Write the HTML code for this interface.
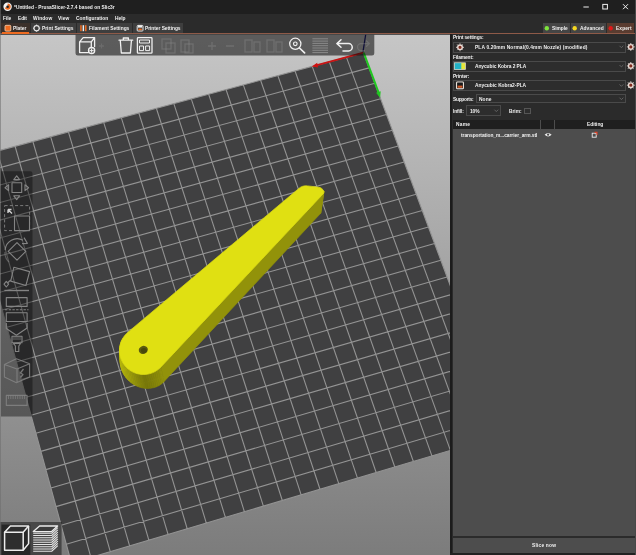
<!DOCTYPE html>
<html><head><meta charset="utf-8"><title>PrusaSlicer</title>
<style>
html,body{margin:0;padding:0;background:#2b2b2b;}
body{width:636px;height:555px;position:relative;overflow:hidden;font-family:"Liberation Sans",sans-serif;}
.a{position:absolute;box-sizing:border-box;}
.t{position:absolute;white-space:nowrap;line-height:20px;height:20px;font-size:9.7px;transform:scale(0.5);transform-origin:0 0;}
</style></head><body>
<div class="a" style="left:0;top:0;width:636px;height:13.8px;background:#1f1f1f"></div>
<div class="a" style="left:0;top:13.8px;width:636px;height:20px;background:#2b2b2b"></div>
<!-- tabs -->
<div class="a" style="left:1px;top:22.8px;width:28.6px;height:10.4px;background:#3b302a"></div>
<div class="a" style="left:30.6px;top:22.8px;width:45.6px;height:10.2px;background:#3e3e3e"></div>
<div class="a" style="left:77.2px;top:22.8px;width:54.8px;height:10.2px;background:#3e3e3e"></div>
<div class="a" style="left:133.4px;top:22.8px;width:50px;height:10.2px;background:#3e3e3e"></div>
<!-- mode buttons -->
<div class="a" style="left:542.8px;top:22.8px;width:27px;height:10.2px;background:#454545"></div>
<div class="a" style="left:571px;top:22.8px;width:34.6px;height:10.2px;background:#454545"></div>
<div class="a" style="left:607px;top:22.8px;width:27.4px;height:10.2px;background:#5a3c30"></div>
<!-- separator line -->
<div class="a" style="left:0;top:32.9px;width:636px;height:1.5px;background:#8e5a48"></div>
<div class="a" style="left:1.6px;top:31.9px;width:27.4px;height:2px;background:#ed6b21"></div>
<svg id="cv" width="450" height="555" viewBox="0 0 450 555" style="position:absolute;left:0;top:0">
<defs><linearGradient id="bg" x1="0" y1="0" x2="0" y2="1"><stop offset="0" stop-color="#c6c6c6"/><stop offset="1" stop-color="#7c7c7c"/></linearGradient>
<clipPath id="cc"><rect x="0" y="34.5" width="450" height="520.5"/></clipPath></defs>
<g clip-path="url(#cc)">
<rect x="0" y="34.5" width="450" height="520.5" fill="url(#bg)"/>
<polygon points="363.40,52.60 -38.60,160.70 71.50,563.20 505.60,434.00" fill="#404041"/>
<path d="M363.40 52.60L505.60 434.00M346.37 57.18L487.25 439.46M329.29 61.77L468.85 444.94M312.18 66.37L450.40 450.43M295.03 70.99L431.91 455.93M277.83 75.61L413.37 461.45M260.60 80.24L394.79 466.98M243.33 84.89L376.16 472.53M226.02 89.54L357.48 478.08M208.66 94.21L338.75 483.66M191.27 98.89L319.98 489.25M173.83 103.58L301.16 494.85M156.36 108.27L282.29 500.46M138.84 112.98L263.37 506.09M121.29 117.71L244.40 511.74M103.69 122.44L225.39 517.40M86.05 127.18L206.32 523.07M68.37 131.94L187.21 528.76M50.64 136.70L168.05 534.46M32.88 141.48L148.84 540.18M15.07 146.27L129.58 545.91M-2.78 151.07L110.27 551.66M-20.67 155.88L90.91 557.42M-38.60 160.70L71.50 563.20M363.40 52.60L-38.60 160.70M369.10 67.90L-34.19 176.81M374.85 83.31L-29.76 193.03M380.63 98.82L-25.29 209.38M386.46 114.45L-20.78 225.84M392.33 130.18L-16.25 242.42M398.24 146.04L-11.68 259.13M404.19 162.00L-7.07 275.96M410.18 178.08L-2.44 292.91M416.22 194.28L2.24 309.99M422.30 210.59L6.94 327.20M428.43 227.02L11.69 344.53M434.60 243.58L16.46 362.00M440.82 260.25L21.28 379.60M447.08 277.05L26.13 397.33M453.39 293.97L31.02 415.20M459.75 311.02L35.94 433.21M466.15 328.20L40.90 451.35M472.60 345.50L45.91 469.63M479.10 362.93L50.94 488.06M485.65 380.50L56.02 506.62M492.25 398.20L61.14 525.33M498.90 416.03L66.30 544.19M505.60 434.00L71.50 563.20" stroke="#939393" stroke-width="1.1" fill="none"/>
<path d="M363.4 52.6L315.2 65.6" stroke="#c81414" stroke-width="1.8" fill="none"/>
<polygon points="311.7,66.4 317.2,62.8 318.0,67.4" fill="#d01010"/>
<path d="M363.7 52.6L378.9 93.3" stroke="#20c820" stroke-width="2" fill="none"/>
<polygon points="380.1,97.8 376.1,92.7 380.7,91.3" fill="#20c820"/>
<path d="M363.0 51.6L365.7 34.5" stroke="#14146e" stroke-width="1.3" fill="none"/>
<polygon points="324.00,191.40 323.60,193.40 320.67,213.34 321.03,211.38" fill="rgb(155,155,10)" stroke="rgb(155,155,10)" stroke-width="0.6"/>
<polygon points="323.60,193.40 161.01,366.91 164.16,381.45 320.67,213.34" fill="rgb(146,146,10)" stroke="rgb(146,146,10)" stroke-width="0.6"/>
<polygon points="161.01,366.91 159.58,368.32 162.78,382.81 164.16,381.45" fill="rgb(145,145,10)" stroke="rgb(145,145,10)" stroke-width="0.6"/>
<polygon points="159.58,368.32 158.04,369.60 161.29,384.04 162.78,382.81" fill="rgb(142,142,9)" stroke="rgb(142,142,9)" stroke-width="0.6"/>
<polygon points="158.04,369.60 156.39,370.74 159.67,385.14 161.29,384.04" fill="rgb(140,140,9)" stroke="rgb(140,140,9)" stroke-width="0.6"/>
<polygon points="156.39,370.74 154.66,371.75 157.96,386.08 159.67,385.14" fill="rgb(138,138,9)" stroke="rgb(138,138,9)" stroke-width="0.6"/>
<polygon points="154.66,371.75 152.84,372.61 156.15,386.88 157.96,386.08" fill="rgb(135,135,9)" stroke="rgb(135,135,9)" stroke-width="0.6"/>
<polygon points="152.84,372.61 150.97,373.31 154.27,387.51 156.15,386.88" fill="rgb(132,132,9)" stroke="rgb(132,132,9)" stroke-width="0.6"/>
<polygon points="150.97,373.31 149.04,373.85 152.32,387.99 154.27,387.51" fill="rgb(129,129,9)" stroke="rgb(129,129,9)" stroke-width="0.6"/>
<polygon points="149.04,373.85 147.07,374.23 150.32,388.29 152.32,387.99" fill="rgb(126,126,8)" stroke="rgb(126,126,8)" stroke-width="0.6"/>
<polygon points="147.07,374.23 145.07,374.45 148.28,388.43 150.32,388.29" fill="rgb(123,123,8)" stroke="rgb(123,123,8)" stroke-width="0.6"/>
<polygon points="145.07,374.45 143.07,374.50 146.23,388.40 148.28,388.43" fill="rgb(120,120,8)" stroke="rgb(120,120,8)" stroke-width="0.6"/>
<polygon points="143.07,374.50 141.07,374.38 144.16,388.20 146.23,388.40" fill="rgb(123,123,8)" stroke="rgb(123,123,8)" stroke-width="0.6"/>
<polygon points="141.07,374.38 139.08,374.09 142.09,387.83 144.16,388.20" fill="rgb(128,128,8)" stroke="rgb(128,128,8)" stroke-width="0.6"/>
<polygon points="139.08,374.09 137.13,373.64 140.05,387.30 142.09,387.83" fill="rgb(133,133,9)" stroke="rgb(133,133,9)" stroke-width="0.6"/>
<polygon points="137.13,373.64 135.22,373.03 138.05,386.61 140.05,387.30" fill="rgb(138,138,9)" stroke="rgb(138,138,9)" stroke-width="0.6"/>
<polygon points="135.22,373.03 133.36,372.25 136.09,385.76 138.05,386.61" fill="rgb(143,143,10)" stroke="rgb(143,143,10)" stroke-width="0.6"/>
<polygon points="133.36,372.25 131.58,371.33 134.19,384.76 136.09,385.76" fill="rgb(148,148,10)" stroke="rgb(148,148,10)" stroke-width="0.6"/>
<polygon points="131.58,371.33 129.89,370.26 132.37,383.61 134.19,384.76" fill="rgb(153,153,10)" stroke="rgb(153,153,10)" stroke-width="0.6"/>
<polygon points="129.89,370.26 128.28,369.06 130.64,382.33 132.37,383.61" fill="rgb(157,157,10)" stroke="rgb(157,157,10)" stroke-width="0.6"/>
<polygon points="128.28,369.06 126.79,367.72 129.00,380.93 130.64,382.33" fill="rgb(161,161,11)" stroke="rgb(161,161,11)" stroke-width="0.6"/>
<polygon points="126.79,367.72 125.41,366.27 127.48,379.40 129.00,380.93" fill="rgb(164,164,11)" stroke="rgb(164,164,11)" stroke-width="0.6"/>
<polygon points="125.41,366.27 124.15,364.70 126.08,377.77 127.48,379.40" fill="rgb(168,168,11)" stroke="rgb(168,168,11)" stroke-width="0.6"/>
<polygon points="124.15,364.70 123.04,363.04 124.82,376.05 126.08,377.77" fill="rgb(171,171,11)" stroke="rgb(171,171,11)" stroke-width="0.6"/>
<polygon points="123.04,363.04 122.06,361.28 123.69,374.24 124.82,376.05" fill="rgb(174,174,12)" stroke="rgb(174,174,12)" stroke-width="0.6"/>
<polygon points="122.06,361.28 121.23,359.46 122.72,372.37 123.69,374.24" fill="rgb(176,176,12)" stroke="rgb(176,176,12)" stroke-width="0.6"/>
<polygon points="121.23,359.46 120.56,357.57 121.90,370.43 122.72,372.37" fill="rgb(178,178,12)" stroke="rgb(178,178,12)" stroke-width="0.6"/>
<polygon points="120.56,357.57 120.05,355.63 121.24,368.45 121.90,370.43" fill="rgb(179,179,12)" stroke="rgb(179,179,12)" stroke-width="0.6"/>
<polygon points="120.05,355.63 119.71,353.65 120.74,366.45 121.24,368.45" fill="rgb(181,181,12)" stroke="rgb(181,181,12)" stroke-width="0.6"/>
<polygon points="119.71,353.65 119.53,351.65 120.42,364.42 120.74,366.45" fill="rgb(181,181,12)" stroke="rgb(181,181,12)" stroke-width="0.6"/>
<polygon points="119.53,351.65 119.52,349.65 120.27,362.40 120.42,364.42" fill="rgb(181,181,12)" stroke="rgb(181,181,12)" stroke-width="0.6"/>
<polygon points="119.52,349.65 119.67,347.65 120.29,360.39 120.27,362.40" fill="rgb(181,181,12)" stroke="rgb(181,181,12)" stroke-width="0.6"/>
<polygon points="119.67,347.65 119.99,345.67 120.48,358.40 120.29,360.39" fill="rgb(181,181,12)" stroke="rgb(181,181,12)" stroke-width="0.6"/>
<polygon points="119.99,345.67 120.48,343.72 120.84,356.46 120.48,358.40" fill="rgb(180,180,12)" stroke="rgb(180,180,12)" stroke-width="0.6"/>
<polygon points="120.48,343.72 121.12,341.82 121.37,354.56 120.84,356.46" fill="rgb(178,178,12)" stroke="rgb(178,178,12)" stroke-width="0.6"/>
<polygon points="121.12,341.82 121.93,339.99 122.07,352.74 121.37,354.56" fill="rgb(176,176,12)" stroke="rgb(176,176,12)" stroke-width="0.6"/>
<polygon points="121.93,339.99 122.88,338.22 122.93,351.00 122.07,352.74" fill="rgb(174,174,12)" stroke="rgb(174,174,12)" stroke-width="0.6"/>
<polygon points="128.05,332.13 299.16,188.20 300.59,187.18 302.15,186.44 303.84,185.98 305.64,185.79 307.57,185.89 318.52,187.19 320.17,187.61 321.63,188.45 322.91,189.71 324.00,191.40 323.60,193.40 161.01,366.91 159.58,368.32 158.04,369.60 156.39,370.74 154.66,371.75 152.84,372.61 150.97,373.31 149.04,373.85 147.07,374.23 145.07,374.45 143.07,374.50 141.07,374.38 139.08,374.09 137.13,373.64 135.22,373.03 133.36,372.25 131.58,371.33 129.89,370.26 128.28,369.06 126.79,367.72 125.41,366.27 124.15,364.70 123.04,363.04 122.06,361.28 121.23,359.46 120.56,357.57 120.05,355.63 119.71,353.65 119.53,351.65 119.52,349.65 119.67,347.65 119.99,345.67 120.48,343.72 121.12,341.82 121.93,339.99 122.88,338.22 123.98,336.54 125.21,334.96 126.57,333.49" fill="#e0e012" stroke="#e0e012" stroke-width="0.7" stroke-linejoin="round"/>
<ellipse cx="143.3" cy="349.9" rx="4.6" ry="4.0" fill="#5a5a10" transform="rotate(-20 143.3 349.9)"/>
<ellipse cx="143.9" cy="350.6" rx="3.0" ry="2.5" fill="#47470c"/>
<path d="M75.5 34.5H374.3V53.2a2.3 2.3 0 0 1 -2.3 2.3H77.8a2.3 2.3 0 0 1 -2.3 -2.3Z" fill="rgba(12,12,12,0.57)"/>
<g fill="none" stroke="#f0f0f0" stroke-width="1.3" stroke-linejoin="round" stroke-linecap="round"><path d="M79.6 41.8V52.6H88.5 M79.6 41.8H91.3V47.5 M79.6 41.8L83.2 37.6H94.6L91.3 41.8 M94.6 37.6V46.5"/><circle cx="91.6" cy="50.6" r="3.1"/><path d="M89.9 50.6H93.3M91.6 48.9V52.3" stroke-width="1"/></g>
<g fill="none" stroke="#f0f0f0" stroke-width="1.3" stroke-linejoin="round" stroke-linecap="round"><path d="M119 40.2H132.7 M120.3 40.6L121.3 53H130.4L131.4 40.6 M123.3 40V38H128.4V40"/></g>
<g fill="none" stroke="#f0f0f0" stroke-width="1.3" stroke-linejoin="round" stroke-linecap="round"><rect x="137.4" y="37.6" width="14.6" height="15.6" rx="0.8"/><rect x="139.9" y="40" width="9.6" height="3" stroke-width="1"/><rect x="139.9" y="46" width="3.6" height="4.6" stroke-width="1"/><rect x="146" y="46" width="3.6" height="4.6" stroke-width="1"/></g>
<g fill="none" stroke="#9a9a9a" stroke-opacity="0.3" stroke-width="1.3"><path d="M99 46H104M101.5 43.5V48.5" stroke-opacity="0.25"/><rect x="162" y="39" width="9" height="10"/><rect x="166" y="43" width="9" height="10"/><rect x="181" y="40" width="8" height="12"/><rect x="185" y="44" width="8" height="9"/><path d="M208 46H216M212 42V50"/><path d="M226 46H234"/><rect x="245" y="40" width="7" height="12"/><rect x="254" y="42" width="6" height="10"/><rect x="267" y="40" width="7" height="12"/><rect x="276" y="42" width="6" height="10"/></g>
<g fill="none" stroke="#f0f0f0" stroke-width="1.3" stroke-linejoin="round" stroke-linecap="round"><circle cx="295.3" cy="43.8" r="5.6"/><circle cx="295.3" cy="43.8" r="1.8" stroke-width="1.2"/><path d="M299.5 48L304.6 52.8" stroke-width="1.7"/></g>
<path d="M312.4 38.8H328M312.4 41.1H328M312.4 43.4H328M312.4 45.7H328M312.4 48.0H328M312.4 50.3H328M312.4 52.6H328" stroke="#8e8e8e" stroke-width="0.9" fill="none"/>
<g fill="none" stroke="#f0f0f0" stroke-width="1.3" stroke-linejoin="round" stroke-linecap="round"><path d="M337.2 43.6H348.6A3.6 3.6 0 0 1 348.6 50.9H343" stroke-width="1.5"/><path d="M341 39.8L337 43.6L341 47.2" stroke-width="1.5"/></g>
<g fill="none" stroke="#9a9a9a" stroke-opacity="0.3" stroke-width="1.3"><path d="M369 43.6H361A3.4 3.4 0 0 0 361 50.6H365M366 40.5L369.3 43.6L366 46.8" stroke-opacity="0.3"/></g>
<path d="M1 171.3H30.3a2.2 2.2 0 0 1 2.2 2.2V416.4H1Z" fill="rgba(8,8,8,0.41)"/>
<g fill="none" stroke="#848484" stroke-width="1.1" stroke-linejoin="round"><rect x="12" y="182.7" width="9.7" height="9.8"/><path d="M13.8 179.6L16.7 175.8L19.6 179.6Z M13.8 195.8L16.7 199.6L19.6 195.8Z M8.6 184.8L5 187.7L8.6 190.6Z M25 184.8L28.6 187.7L25 190.6Z"/></g>
<g fill="none" stroke="#848484" stroke-width="1.1" stroke-linejoin="round"><rect x="4.6" y="205.6" width="25" height="25" stroke-dasharray="3 2.2" stroke-width="0.9"/><rect x="14.5" y="216" width="15" height="14.6"/><path d="M8 209.5L12 213.5M8 209.5V213M8 209.5H11.5" stroke="#cfcfcf" stroke-width="1.4"/></g>
<g fill="none" stroke="#848484" stroke-width="1.1" stroke-linejoin="round"><path d="M17 242.6L25.8 251.4L17 260.2L8.2 251.4Z"/><path d="M5.2 250A12 12 0 0 1 23 240.2"/><path d="M24 237.6L27.4 243.4L22 243.6" /><path d="M5 252A12 12 0 0 0 9 262" stroke-opacity="0.6"/></g>
<g fill="none" stroke="#848484" stroke-width="1.1" stroke-linejoin="round"><path d="M13.9 267.2L29.6 271.6L25.9 285.5L10.7 281.1Z"/><path d="M6.3 281.4L8.6 284.2L6.3 287L4 284.2Z M8 282.5L10.7 280"/><path d="M4.4 290.5H29" stroke-width="1.4"/></g>
<g fill="none" stroke="#848484" stroke-width="1.1" stroke-linejoin="round"><rect x="6.3" y="297.6" width="20.8" height="8.8"/><path d="M5 309.8H28.5" stroke-dasharray="2.4 1.3"/><rect x="6.3" y="312.7" width="20.8" height="8.8"/></g>
<g fill="none" stroke="#848484" stroke-width="1.1" stroke-linejoin="round"><path d="M6.3 323V328.5L16.4 335.2L27.1 328V323"/><rect x="12" y="336.2" width="10" height="6.6"/><path d="M14 336.2V340M16 336.2V340M18 336.2V340M20 336.2V340" stroke-width="0.7"/><path d="M13.5 343.5H20.5L18.8 346V351.5H15.4V346Z"/></g>
<g fill="none" stroke="#848484" stroke-width="1.1" stroke-linejoin="round" stroke-opacity="0.85"><path d="M16.4 358.8L29.6 363.8V377L16.4 382.7L4.4 377V364.5Z M4.4 364.5L17 368.9L29.6 363.8 M17 368.9V382.7"/><path d="M23.5 369L20.4 373L23 374.5L20.5 377.5" stroke-width="1.3"/></g>
<g fill="none" stroke="#848484" stroke-width="1.1" stroke-linejoin="round" stroke-opacity="0.85"><rect x="6.3" y="395.4" width="20.8" height="10"/><path d="M8.5 395.4V399M10.8 395.4V399M13.1 395.4V399M15.4 395.4V399M17.7 395.4V399M20 395.4V399M22.3 395.4V399M24.6 395.4V399" stroke-width="0.8"/></g>
<rect x="0" y="522" width="61.6" height="34" fill="rgba(0,0,0,0.44)"/>
<rect x="1.5" y="524.6" width="28.8" height="31" fill="#262626"/>
<g fill="none" stroke="#ececec" stroke-width="1.5" stroke-linejoin="round"><path d="M4.6 532.2H23.2V550.2H4.6Z" fill="#2e2e2e"/><path d="M4.6 532.2L10.4 526H28.6L23.2 532.2Z" fill="#2e2e2e"/><path d="M28.6 526V543.6L23.2 550.2" fill="none"/></g>
<path d="M33.3 531.6L39.6 526H57.6L51.6 531.6Z" fill="#3c3c3c" stroke="#ececec" stroke-width="1.3" stroke-linejoin="round"/>
<path d="M33.2 533.20H51.8L57.8 527.60M33.2 535.45H51.8L57.8 529.85M33.2 537.70H51.8L57.8 532.10M33.2 539.95H51.8L57.8 534.35M33.2 542.20H51.8L57.8 536.60M33.2 544.45H51.8L57.8 538.85M33.2 546.70H51.8L57.8 541.10M33.2 548.95H51.8L57.8 543.35M33.2 551.20H51.8L57.8 545.60" fill="none" stroke="#e6e6e6" stroke-width="1.15"/>
</g>
</svg>
<!-- right panel -->
<div class="a" style="left:450px;top:34.4px;width:186px;height:521px;background:#2b2b2b"></div>
<div class="a" style="left:450px;top:34.4px;width:1.8px;height:521px;background:#1c1c1c"></div>
<!-- combos -->
<div class="a" style="left:453.2px;top:42.4px;width:172.8px;height:10.2px;border:0.8px solid #4a4a4a;background:#2d2d2d"></div>
<div class="a" style="left:453.2px;top:61.4px;width:172.8px;height:10.2px;border:0.8px solid #4a4a4a;background:#2d2d2d"></div>
<div class="a" style="left:453.2px;top:80.4px;width:172.8px;height:10.2px;border:0.8px solid #4a4a4a;background:#2d2d2d"></div>
<div class="a" style="left:476.4px;top:93.6px;width:149.6px;height:9.8px;border:0.8px solid #4a4a4a;background:#2d2d2d"></div>
<div class="a" style="left:466px;top:105.4px;width:34.6px;height:10.2px;border:0.8px solid #4a4a4a;background:#2d2d2d"></div>
<div class="a" style="left:524px;top:107.6px;width:6.6px;height:6.6px;border:0.8px solid #555;background:#2d2d2d"></div>
<!-- list -->
<div class="a" style="left:453.4px;top:120.2px;width:181.4px;height:8.8px;background:#1f1f1f"></div>
<div class="a" style="left:540.2px;top:120.2px;width:1.2px;height:8.8px;background:#4d4d4d"></div>
<div class="a" style="left:554px;top:120.2px;width:1.2px;height:8.8px;background:#4d4d4d"></div>
<div class="a" style="left:453.4px;top:129px;width:181.4px;height:407px;background:#4d4d4d"></div>
<div class="a" style="left:452.6px;top:538.2px;width:183.4px;height:14.4px;background:#4d4d4d"></div>
<div class="a" style="left:450px;top:552.6px;width:186px;height:2.4px;background:#222"></div>
<div class="a" style="left:0;top:0;width:0.8px;height:555px;background:rgba(110,110,110,0.55)"></div>
<div class="a" style="left:634.8px;top:0;width:1.2px;height:555px;background:#484848"></div>
<svg width="636" height="555" viewBox="0 0 636 555" style="position:absolute;left:0;top:0;pointer-events:none"><circle cx="7.6" cy="6.7" r="4.2" fill="#f4f4f4"/><path d="M7.6 3.6A3.1 3.1 0 1 1 4.7 7.8L7.6 6.7Z" fill="#ed6b21"/><circle cx="7.6" cy="6.7" r="1.3" fill="#222"/><path d="M583.4 7H588.8" stroke="#f0f0f0" stroke-width="1"/><rect x="602.8" y="4.4" width="4.6" height="4.6" fill="none" stroke="#f0f0f0" stroke-width="1"/><path d="M623 4.2L628 9.2M628 4.2L623 9.2" stroke="#f0f0f0" stroke-width="1"/><rect x="5" y="25.3" width="5.8" height="5.8" rx="1" fill="#ed6b21" stroke="#f3c9a8" stroke-width="0.9"/><circle cx="36.6" cy="28.2" r="2.6" fill="none" stroke="#e8e8e8" stroke-width="1.1"/><path d="M36.6 24.6V25.6M36.6 30.8V31.8M33 28.2H34M39.2 28.2H40.2" stroke="#e8e8e8" stroke-width="1"/><rect x="80.2" y="25.2" width="1.5" height="6" fill="#ed6b21"/><rect x="82.6" y="25.2" width="1.5" height="6" fill="#f0f0f0"/><rect x="85" y="25.2" width="1.5" height="6" fill="#ed6b21"/><rect x="137.2" y="25.4" width="5.8" height="5.6" rx="0.8" fill="none" stroke="#e8e8e8" stroke-width="1"/><rect x="138" y="25.6" width="4.2" height="2" fill="#f0f0f0"/><rect x="138.4" y="28.6" width="3.4" height="1.6" fill="#ed6b21"/><circle cx="546.8" cy="28.3" r="2.2" fill="#7ee43c"/><circle cx="574.7" cy="28.3" r="2.2" fill="#f5d820"/><circle cx="610.7" cy="28.3" r="2.2" fill="#e01818"/><circle cx="460" cy="47.3" r="2.3" fill="#7e2a1c" stroke="#e8dcd6" stroke-width="1.4"/><path d="M460 43.4V44.3M460 50.3V51.199999999999996M456.1 47.3H457M463 47.3H463.9M457.25 44.55L457.9 45.199999999999996M462.75 50.05L462.1 49.4M457.25 50.05L457.9 49.4M462.75 44.55L462.1 45.199999999999996" stroke="#e8dcd6" stroke-width="1"/><circle cx="630.8" cy="46.9" r="2.3" fill="#7e2a1c" stroke="#e8dcd6" stroke-width="1.4"/><path d="M630.8 43.0V43.9M630.8 49.9V50.8M626.9 46.9H627.8M633.8 46.9H634.6999999999999M628.05 44.15L628.6999999999999 44.8M633.55 49.65L632.9 49.0M628.05 49.65L628.6999999999999 49.0M633.55 44.15L632.9 44.8" stroke="#e8dcd6" stroke-width="1"/><circle cx="630.8" cy="65.9" r="2.3" fill="#7e2a1c" stroke="#e8dcd6" stroke-width="1.4"/><path d="M630.8 62.00000000000001V62.900000000000006M630.8 68.9V69.80000000000001M626.9 65.9H627.8M633.8 65.9H634.6999999999999M628.05 63.150000000000006L628.6999999999999 63.800000000000004M633.55 68.65L632.9 68.0M628.05 68.65L628.6999999999999 68.0M633.55 63.150000000000006L632.9 63.800000000000004" stroke="#e8dcd6" stroke-width="1"/><circle cx="630.8" cy="85.2" r="2.3" fill="#7e2a1c" stroke="#e8dcd6" stroke-width="1.4"/><path d="M630.8 81.3V82.2M630.8 88.2V89.10000000000001M626.9 85.2H627.8M633.8 85.2H634.6999999999999M628.05 82.45L628.6999999999999 83.10000000000001M633.55 87.95L632.9 87.3M628.05 87.95L628.6999999999999 87.3M633.55 82.45L632.9 83.10000000000001" stroke="#e8dcd6" stroke-width="1"/><rect x="454.3" y="62.8" width="11.2" height="6.8" fill="#e6e63a"/><rect x="454.3" y="62.8" width="7" height="6.8" fill="#22b2c6"/><rect x="454.3" y="62.8" width="11.2" height="6.8" fill="none" stroke="#d8d8d8" stroke-width="0.7"/><rect x="456.6" y="82" width="6.8" height="6.8" rx="0.8" fill="none" stroke="#f0e8e0" stroke-width="1.1"/><rect x="457.4" y="82.8" width="5.2" height="5.2" fill="#1a1a1a"/><rect x="457.6" y="85.6" width="4.8" height="2.2" fill="#d25a28"/><path d="M619.5 45.800000000000004L621.4 47.7L623.3 45.800000000000004" fill="none" stroke="#6e6e6e" stroke-width="0.8"/><path d="M619.5 65.0L621.4 66.9L623.3 65.0" fill="none" stroke="#6e6e6e" stroke-width="0.8"/><path d="M619.5 84.39999999999999L621.4 86.3L623.3 84.39999999999999" fill="none" stroke="#6e6e6e" stroke-width="0.8"/><path d="M619.5 97.69999999999999L621.4 99.6L623.3 97.69999999999999" fill="none" stroke="#6e6e6e" stroke-width="0.8"/><path d="M494.40000000000003 109.69999999999999L496.3 111.6L498.2 109.69999999999999" fill="none" stroke="#6e6e6e" stroke-width="0.8"/><path d="M544.6 134.8Q548.1 131 551.6 134.8Q548.1 138.4 544.6 134.8Z" fill="#ececec"/><circle cx="548.1" cy="134.7" r="1.15" fill="#4d4d4d"/><rect x="592.2" y="133.2" width="4" height="4" fill="none" stroke="#ececec" stroke-width="0.9"/><path d="M594.6 132.4H597V135" stroke="#e0442a" stroke-width="1.1" fill="none"/></svg>
<div id="txt" style="position:absolute;left:0;top:0;width:636px;height:555px;will-change:transform;opacity:0.999">
<span class="t" id="title" style="left:13.80px;top:1.90px;letter-spacing:0.0128px;color:#f2f2f2;font-weight:700">*Untitled - PrusaSlicer-2.7.4 based on Slic3r</span>
<span class="t" id="m1" style="left:3.00px;top:12.90px;letter-spacing:-0.0258px;color:#f2f2f2;font-weight:700">File</span>
<span class="t" id="m2" style="left:17.60px;top:12.90px;letter-spacing:-0.1742px;color:#f2f2f2;font-weight:700">Edit</span>
<span class="t" id="m3" style="left:32.70px;top:12.90px;letter-spacing:0.2588px;color:#f2f2f2;font-weight:700">Window</span>
<span class="t" id="m4" style="left:58.40px;top:12.90px;letter-spacing:0.1734px;color:#f2f2f2;font-weight:700">View</span>
<span class="t" id="m5" style="left:76.00px;top:12.90px;letter-spacing:0.0692px;color:#f2f2f2;font-weight:700">Configuration</span>
<span class="t" id="m6" style="left:114.50px;top:12.90px;letter-spacing:0.0000px;color:#f2f2f2;font-weight:700">Help</span>
<span class="t" id="t1" style="left:13.00px;top:23.00px;letter-spacing:-0.0230px;color:#f2f2f2;font-weight:700">Plater</span>
<span class="t" id="t2" style="left:42.00px;top:23.00px;letter-spacing:0.0012px;color:#f2f2f2;font-weight:700">Print Settings</span>
<span class="t" id="t3" style="left:89.30px;top:23.00px;letter-spacing:-0.0088px;color:#f2f2f2;font-weight:700">Filament Settings</span>
<span class="t" id="t4" style="left:145.00px;top:23.00px;letter-spacing:-0.0712px;color:#f2f2f2;font-weight:700">Printer Settings</span>
<span class="t" id="b1" style="left:552.00px;top:23.00px;letter-spacing:-0.0276px;color:#f2f2f2;font-weight:700">Simple</span>
<span class="t" id="b2" style="left:580.20px;top:23.00px;letter-spacing:0.1610px;color:#f2f2f2;font-weight:700">Advanced</span>
<span class="t" id="b3" style="left:616.40px;top:23.00px;letter-spacing:0.2406px;color:#f2f2f2;font-weight:700">Expert</span>
<span class="t" id="l1" style="left:452.90px;top:32.30px;letter-spacing:-0.2760px;color:#f2f2f2;font-weight:700">Print settings:</span>
<span class="t" id="c1" style="left:475.40px;top:41.90px;letter-spacing:0.2646px;color:#f2f2f2;font-weight:700">PLA 0.20mm Normal(0.4mm Nozzle) (modified)</span>
<span class="t" id="l2" style="left:452.90px;top:51.70px;letter-spacing:-0.2514px;color:#f2f2f2;font-weight:700">Filament:</span>
<span class="t" id="c2" style="left:475.40px;top:61.10px;letter-spacing:-0.1118px;color:#f2f2f2;font-weight:700">Anycubic Kobra 2 PLA</span>
<span class="t" id="l3" style="left:452.90px;top:70.70px;letter-spacing:-0.2566px;color:#f2f2f2;font-weight:700">Printer:</span>
<span class="t" id="c3" style="left:475.40px;top:80.10px;letter-spacing:-0.0042px;color:#f2f2f2;font-weight:700">Anycubic Kobra2-PLA</span>
<span class="t" id="l4" style="left:452.90px;top:93.70px;letter-spacing:-0.5500px;color:#f2f2f2;font-weight:700">Supports:</span>
<span class="t" id="c4" style="left:478.50px;top:93.70px;letter-spacing:0.2454px;color:#f2f2f2;font-weight:700">None</span>
<span class="t" id="l5" style="left:452.90px;top:105.60px;letter-spacing:-0.2486px;color:#f2f2f2;font-weight:700">Infill:</span>
<span class="t" id="c5" style="left:469.60px;top:105.60px;letter-spacing:-0.1968px;color:#f2f2f2;font-weight:700">10%</span>
<span class="t" id="l6" style="left:509.20px;top:105.60px;letter-spacing:-0.0226px;color:#f2f2f2;font-weight:700">Brim:</span>
<span class="t" id="h1" style="left:455.70px;top:119.40px;letter-spacing:0.5024px;color:#f2f2f2;font-weight:700">Name</span>
<span class="t" id="h2" style="left:587.00px;top:119.40px;letter-spacing:-0.0326px;color:#f2f2f2;font-weight:700">Editing</span>
<span class="t" id="it" style="left:461.20px;top:129.50px;letter-spacing:-0.0724px;color:#f2f2f2;font-weight:700">transportation_m...carrier_arm.stl</span>
<span class="t" id="sl" style="left:532.40px;top:540.00px;letter-spacing:0.3902px;color:#f2f2f2;font-weight:700">Slice now</span>
</div>
</body></html>
